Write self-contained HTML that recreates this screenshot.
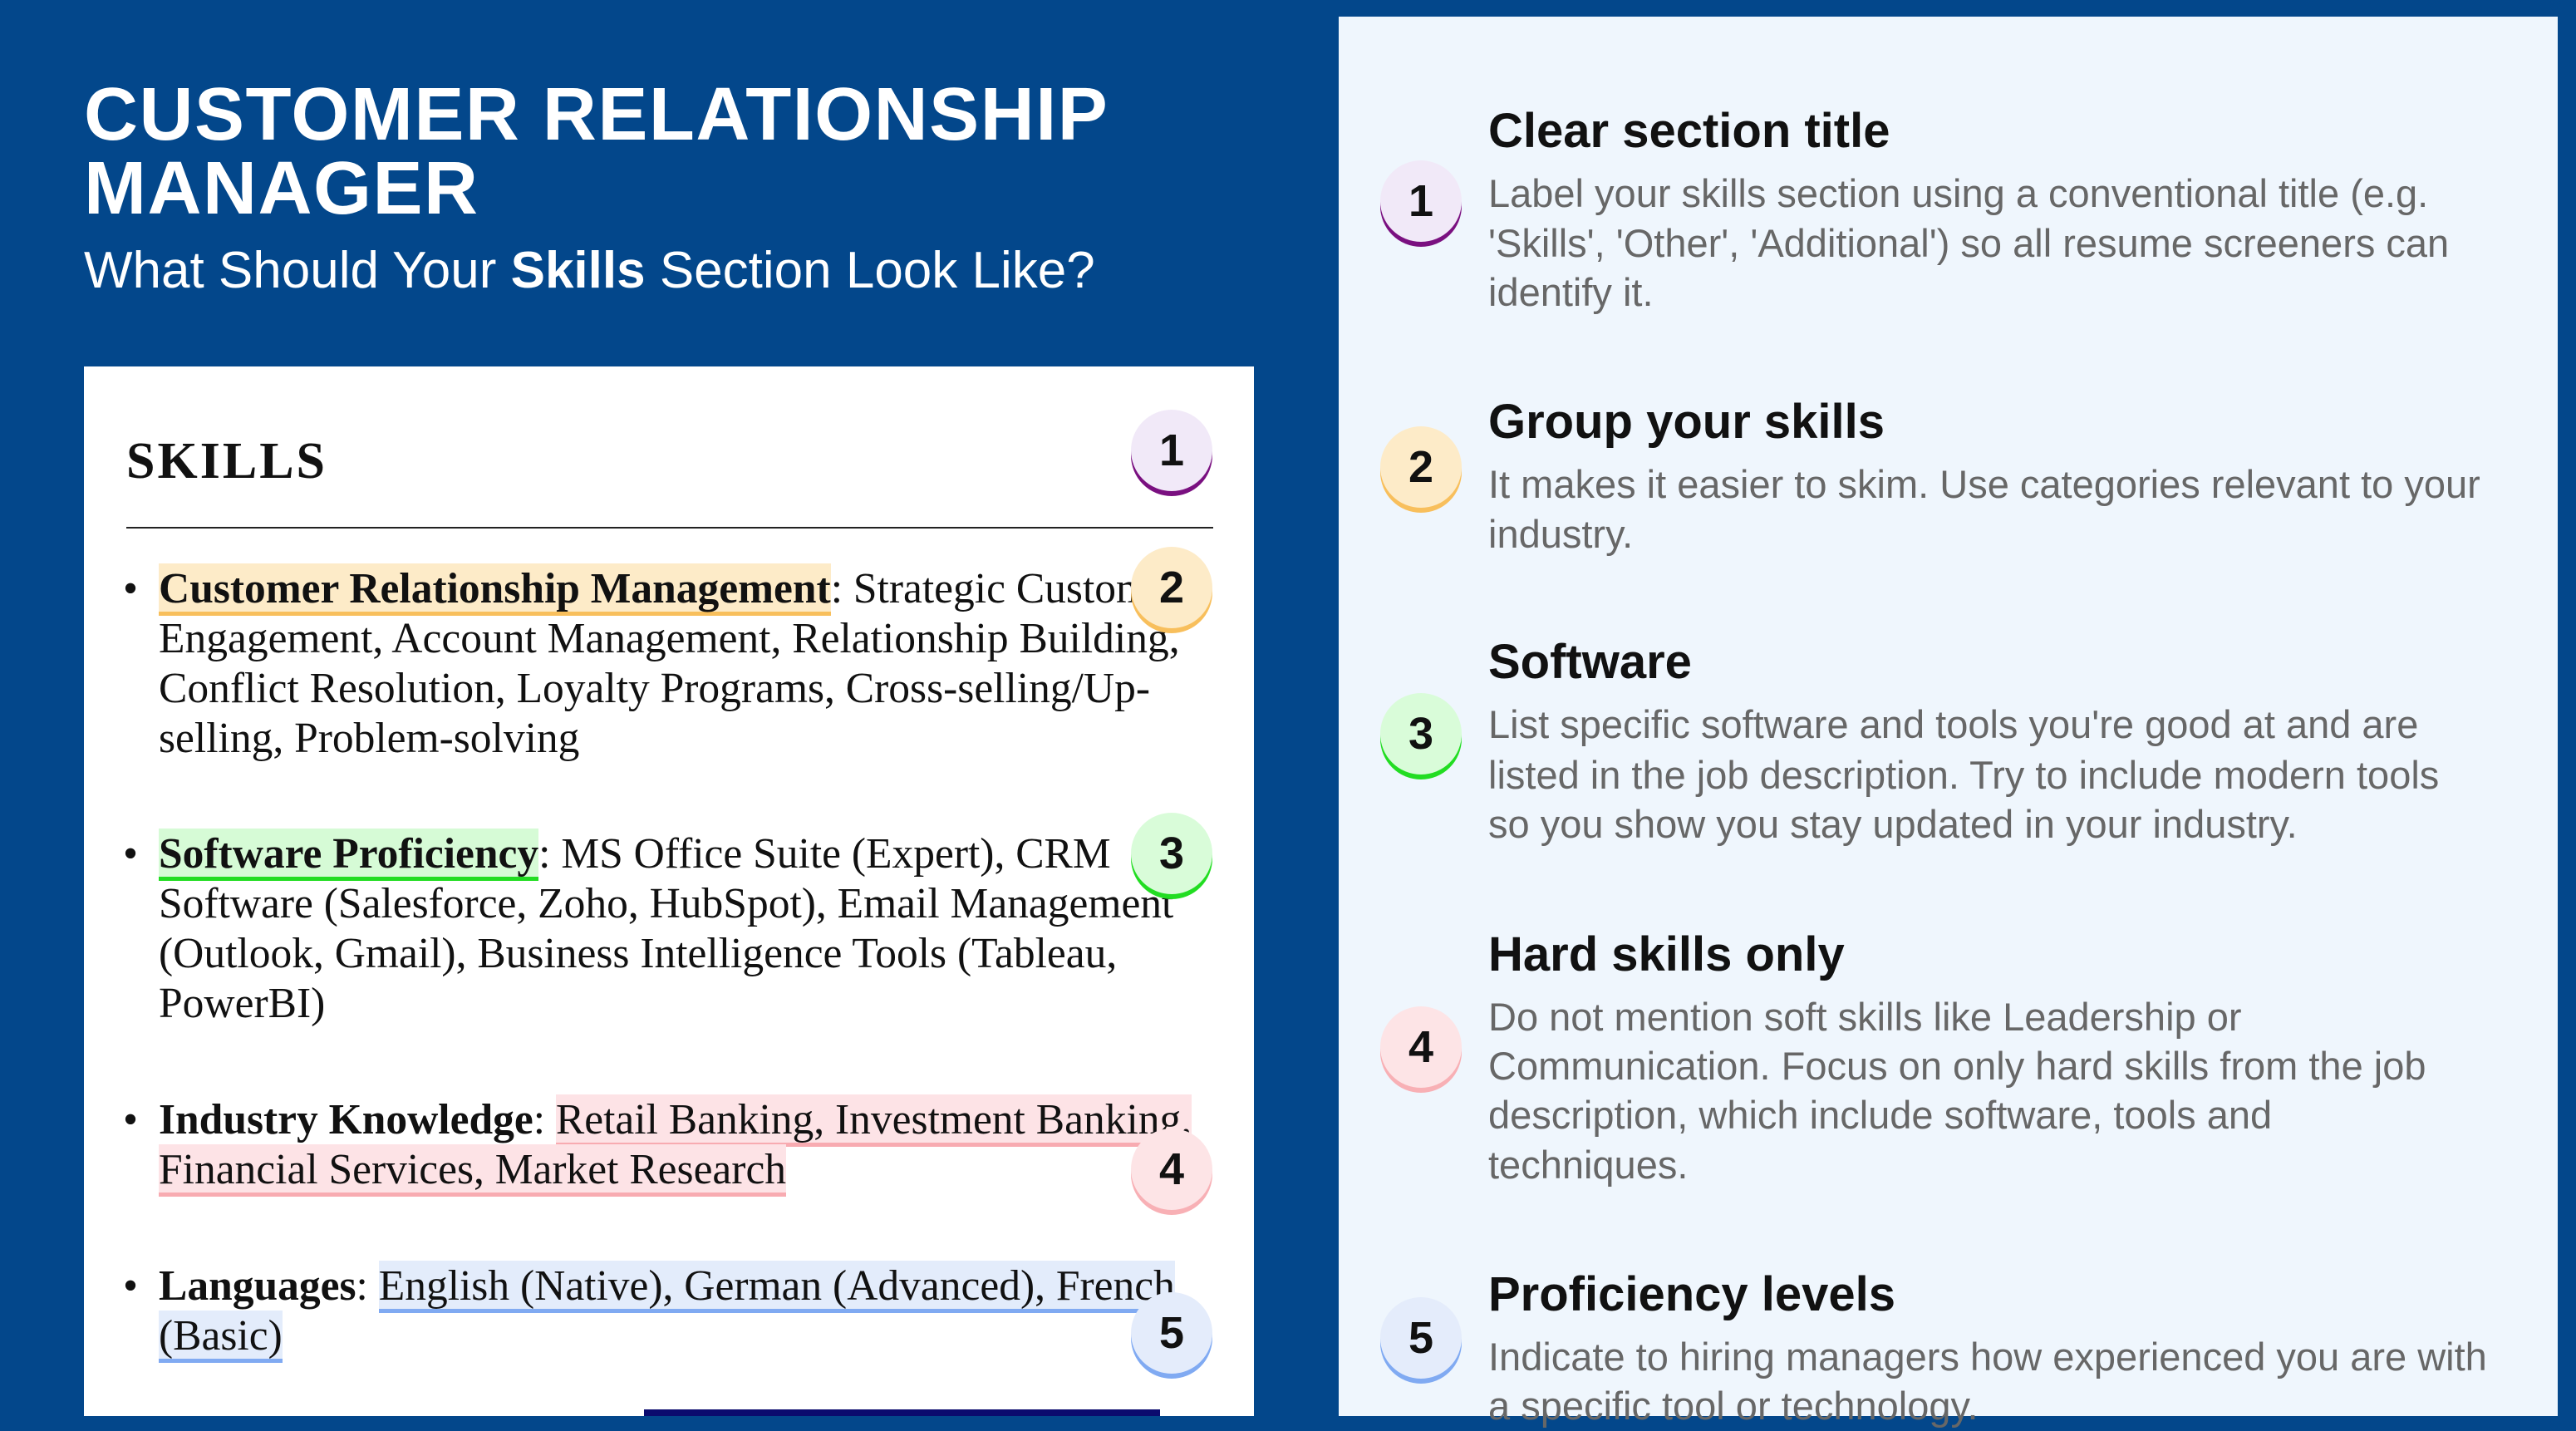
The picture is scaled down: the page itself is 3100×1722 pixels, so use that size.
<!DOCTYPE html>
<html><head><meta charset="utf-8">
<style>
*{margin:0;padding:0;box-sizing:border-box}
body{width:3100px;height:1704px;background:#03478b;position:relative;overflow:hidden;font-family:"Liberation Sans",sans-serif}
.a{position:absolute;white-space:nowrap}
.t{left:101px;color:#fff;font-weight:bold;font-size:90px;line-height:89px;letter-spacing:1.5px}
.sub{left:101px;top:296px;color:#fff;font-size:62px;line-height:60px}
.card{position:absolute;left:101px;top:441px;width:1408px;height:1263px;background:#fff}
.panel{position:absolute;left:1611px;top:20px;width:1467px;height:1684px;background:#eff6fd}
.sk{left:152px;top:520px;font-family:"Liberation Serif",serif;font-weight:bold;font-size:62px;line-height:70px;letter-spacing:3px;color:#111}
.rule{position:absolute;left:152px;top:634px;width:1308px;height:2px;background:#222}
.l{left:191px;font-family:"Liberation Serif",serif;font-size:51.5px;line-height:60px;color:#111}
.b{left:148px;font-family:"Liberation Serif",serif;font-size:51.5px;line-height:60px;color:#111}
.h{padding:2px 0 4px}
.o{background:#fdebc8;box-shadow:inset 0 -5px 0 #f8bf5c}
.g{background:#d6fbd6;box-shadow:inset 0 -5px 0 #22dd22}
.p{background:#fde3e6;box-shadow:inset 0 -5px 0 #f8abb1}
.bl{background:#e3ecfb;box-shadow:inset 0 -5px 0 #80aaf2}
.c{position:absolute;width:98px;height:98px;border-radius:50%;text-align:center;font-weight:bold;font-size:54px;line-height:98px;color:#111}
.hd{left:1791px;font-family:"Liberation Sans Narrow","Liberation Sans",sans-serif;font-weight:bold;font-size:58px;line-height:60px;color:#111}
.bd{left:1791px;font-family:"Liberation Sans Narrow","Liberation Sans",sans-serif;font-size:47px;line-height:60px;color:#676767}
</style></head><body>
<div class="a t" style="top:94px">CUSTOMER RELATIONSHIP</div>
<div class="a t" style="top:183px">MANAGER</div>
<div class="a sub">What Should Your <b>Skills</b> Section Look Like?</div>

<div class="card"></div>
<div class="a sk">SKILLS</div>
<div class="rule"></div>

<div class="a b" style="top:679px">•</div>
<div class="a l" style="top:679px"><b class="h o">Customer Relationship Management</b>: Strategic Customer</div>
<div class="a l" style="top:739px">Engagement, Account Management, Relationship Building,</div>
<div class="a l" style="top:799px">Conflict Resolution, Loyalty Programs, Cross-selling/Up-</div>
<div class="a l" style="top:859px">selling, Problem-solving</div>

<div class="a b" style="top:998px">•</div>
<div class="a l" style="top:998px"><b class="h g">Software Proficiency</b>: MS Office Suite (Expert), CRM</div>
<div class="a l" style="top:1058px">Software (Salesforce, Zoho, HubSpot), Email Management</div>
<div class="a l" style="top:1118px">(Outlook, Gmail), Business Intelligence Tools (Tableau,</div>
<div class="a l" style="top:1178px">PowerBI)</div>

<div class="a b" style="top:1318px">•</div>
<div class="a l" style="top:1318px"><b>Industry Knowledge</b>: <span class="h p">Retail Banking, Investment Banking,</span></div>
<div class="a l" style="top:1378px"><span class="h p">Financial Services, Market Research</span></div>

<div class="a b" style="top:1518px">•</div>
<div class="a l" style="top:1518px"><b>Languages</b>: <span class="h bl">English (Native), German (Advanced), French</span></div>
<div class="a l" style="top:1578px"><span class="h bl">(Basic)</span></div>

<div style="position:absolute;left:775px;top:1696px;width:621px;height:8px;background:#0b0b6e"></div>

<div class="c" style="left:1361px;top:493px;background:#f1e9f8;box-shadow:0 6px 0 #7a1080">1</div>
<div class="c" style="left:1361px;top:658px;background:#fdebc8;box-shadow:0 6px 0 #f8bf5c">2</div>
<div class="c" style="left:1361px;top:978px;background:#d9fcd9;box-shadow:0 6px 0 #22dd22">3</div>
<div class="c" style="left:1361px;top:1358px;background:#fde4e6;box-shadow:0 6px 0 #f8b0b5">4</div>
<div class="c" style="left:1361px;top:1555px;background:#e4ecfb;box-shadow:0 6px 0 #80aaf2">5</div>

<div class="panel"></div>
<div class="c" style="left:1661px;top:193px;background:#f1e9f8;box-shadow:0 6px 0 #7a1080">1</div>
<div class="c" style="left:1661px;top:513px;background:#fdebc8;box-shadow:0 6px 0 #f8bf5c">2</div>
<div class="c" style="left:1661px;top:834px;background:#d9fcd9;box-shadow:0 6px 0 #22dd22">3</div>
<div class="c" style="left:1661px;top:1211px;background:#fde4e6;box-shadow:0 6px 0 #f8b0b5">4</div>
<div class="c" style="left:1661px;top:1561px;background:#e4ecfb;box-shadow:0 6px 0 #80aaf2">5</div>

<div class="a hd" style="top:128px">Clear section title</div>
<div class="a bd" style="top:203px">Label your skills section using a conventional title (e.g.</div>
<div class="a bd" style="top:263px">'Skills', 'Other', 'Additional') so all resume screeners can</div>
<div class="a bd" style="top:322px">identify it.</div>

<div class="a hd" style="top:478px">Group your skills</div>
<div class="a bd" style="top:553px">It makes it easier to skim. Use categories relevant to your</div>
<div class="a bd" style="top:613px">industry.</div>

<div class="a hd" style="top:767px">Software</div>
<div class="a bd" style="top:842px">List specific software and tools you're good at and are</div>
<div class="a bd" style="top:903px">listed in the job description. Try to include modern tools</div>
<div class="a bd" style="top:962px">so you show you stay updated in your industry.</div>

<div class="a hd" style="top:1119px">Hard skills only</div>
<div class="a bd" style="top:1194px">Do not mention soft skills like Leadership or</div>
<div class="a bd" style="top:1253px">Communication. Focus on only hard skills from the job</div>
<div class="a bd" style="top:1312px">description, which include software, tools and</div>
<div class="a bd" style="top:1372px">techniques.</div>

<div class="a hd" style="top:1528px">Proficiency levels</div>
<div class="a bd" style="top:1603px">Indicate to hiring managers how experienced you are with</div>
<div class="a bd" style="top:1662px">a specific tool or technology.</div>
</body></html>
